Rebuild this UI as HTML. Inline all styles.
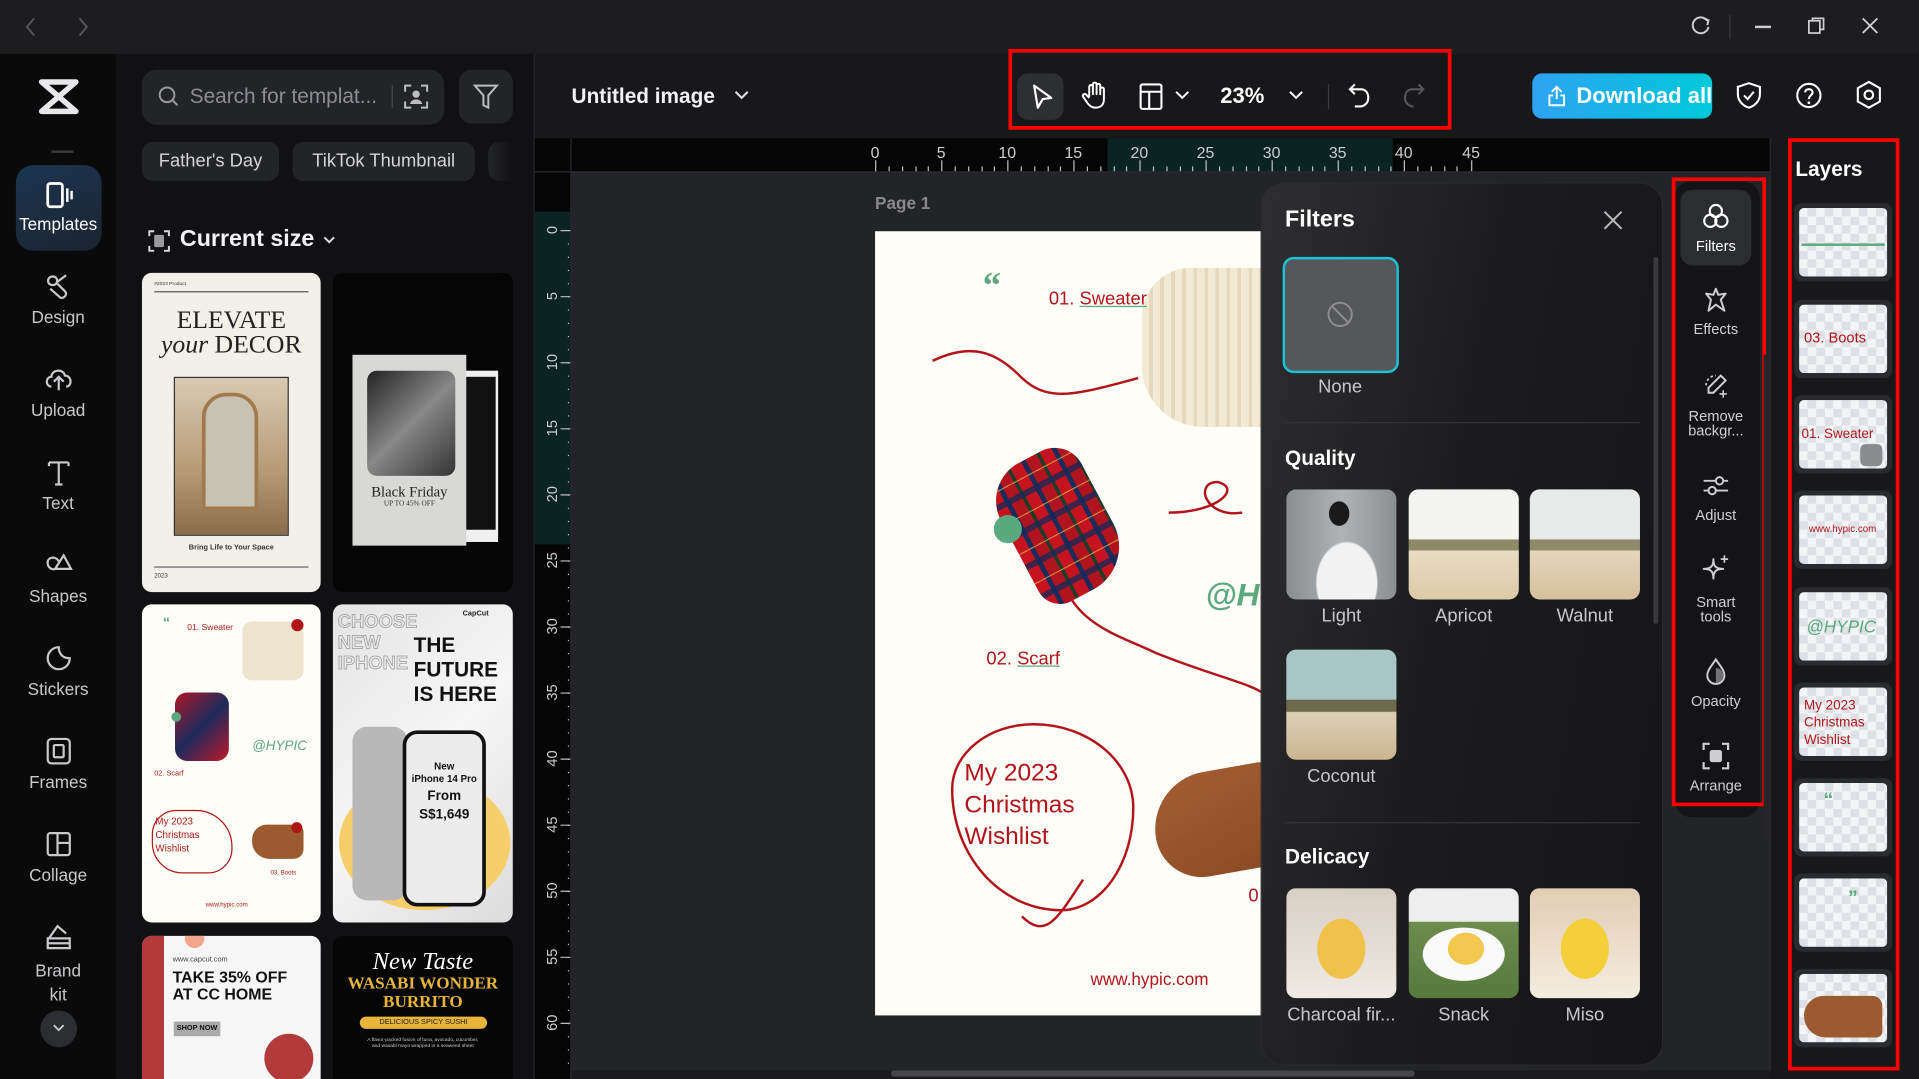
<!DOCTYPE html>
<html><head><meta charset="utf-8">
<style>
html,body{margin:0;padding:0;width:1919px;height:1079px;overflow:hidden;background:#1c1c1e;}
#w{position:absolute;left:0;top:0;width:1568px;height:882px;transform:scale(1.22386,1.2234);transform-origin:0 0;font-family:"Liberation Sans",sans-serif;color:#e8e8ea;overflow:hidden;background:#1e1e20}
.a{position:absolute}
svg{position:absolute;overflow:visible}
.lbl{position:absolute;width:95px;text-align:center;font-size:14px;color:#c9c9cc}
.tl{position:absolute;width:74px;text-align:center;font-size:12px;color:#d0d0d3;line-height:12px}
.thumb{position:absolute;width:90px;height:90px;border-radius:8px}
.tlab{position:absolute;width:90px;text-align:center;font-size:15px;color:#c8c8cb}
.lay{position:absolute;left:1466px;width:80px;height:64px;background:#2a2b2f;border-radius:6px}
.lay .in{position:absolute;left:4px;top:4px;width:72px;height:56px;border-radius:4px;background:repeating-conic-gradient(#dde1e5 0 25%,#f3f4f6 0 50%) 0 0/14px 14px;overflow:hidden}
.card{position:absolute;border-radius:8px;overflow:hidden}
</style></head><body><div id="w">
<!-- title bar -->
<div class="a" style="left:0;top:0;width:1568px;height:44px;background:#1d1d1f"></div>
<svg style="left:20px;top:14px" width="12" height="16"><path d="M8 1 L2 8 L8 15" stroke="#55565a" stroke-width="1.6" fill="none"/></svg>
<svg style="left:62px;top:14px" width="12" height="16"><path d="M3 1 L9 8 L3 15" stroke="#55565a" stroke-width="1.6" fill="none"/></svg>
<svg style="left:1382px;top:13px" width="16" height="16"><path d="M13 4 A6.5 6.5 0 1 0 14 9" stroke="#cfcfd2" stroke-width="1.6" fill="none"/><path d="M10 2 L14 3.5 L13 7.5" stroke="#cfcfd2" stroke-width="1.6" fill="none"/></svg>
<div class="a" style="left:1413px;top:12px;width:1px;height:20px;background:#3a3a3d"></div>
<div class="a" style="left:1434px;top:21px;width:13px;height:1.5px;background:#cfcfd2"></div>
<svg style="left:1477px;top:14px" width="14" height="14"><rect x="1" y="3" width="9" height="10" stroke="#cfcfd2" stroke-width="1.4" fill="none"/><path d="M4 3 V1 H13 V10 H10" stroke="#cfcfd2" stroke-width="1.4" fill="none"/></svg>
<svg style="left:1521px;top:14px" width="14" height="14"><path d="M1 1 L13 13 M13 1 L1 13" stroke="#cfcfd2" stroke-width="1.5"/></svg>

<!-- left sidebar -->
<div class="a" style="left:0;top:44px;width:95px;height:838px;background:#0a0a0b"></div>
<svg style="left:31px;top:64px" width="34" height="30"><path d="M3 3 H31 L3 27 H31 Z" stroke="#e8e8ea" stroke-width="4.5" fill="none" stroke-linejoin="round"/></svg>
<div class="a" style="left:42px;top:123px;width:18px;height:2px;background:#3a3a3d"></div>
<div class="a" style="left:13px;top:135px;width:70px;height:70px;border-radius:14px;background:linear-gradient(160deg,#1b3550,#1c2430)"></div>
<svg style="left:37px;top:149px" width="24" height="22"><rect x="2" y="1" width="12" height="19" rx="2" stroke="#fff" stroke-width="2.2" fill="none"/><path d="M18 5 V16 M21.5 7 V14" stroke="#fff" stroke-width="2"/></svg>
<div class="lbl" style="left:0;top:175px;color:#fff">Templates</div>
<svg style="left:37px;top:223px" width="22" height="22"><path d="M6 3 C1 3 1 10 6 10 C11 10 11 3 6 3 M9 8 L17 2 M4 13 L12 20 C14 22 19 18 16 15 L10 9" stroke="#c9c9cc" stroke-width="1.8" fill="none"/></svg>
<div class="lbl" style="left:0;top:251px">Design</div>
<svg style="left:36px;top:299px" width="24" height="22"><path d="M6 17 C1 17 1 9 6 9 C6 3 16 2 17 8 C23 8 23 17 18 17 M12 20 V10 M8 13 L12 9 L16 13" stroke="#c9c9cc" stroke-width="1.8" fill="none"/></svg>
<div class="lbl" style="left:0;top:327px">Upload</div>
<svg style="left:38px;top:376px" width="20" height="22"><path d="M2 2 H18 M10 2 V20 M2 2 V5 M18 2 V5 M7 20 H13" stroke="#c9c9cc" stroke-width="1.8" fill="none"/></svg>
<div class="lbl" style="left:0;top:403px">Text</div>
<svg style="left:37px;top:451px" width="22" height="22"><path d="M8 14 L15 3 L21 14 Z" stroke="#c9c9cc" stroke-width="1.8" fill="none"/><path d="M11 8 C9 3 1 4 2 10 C3 15 8 15 10 13" stroke="#c9c9cc" stroke-width="1.8" fill="none"/></svg>
<div class="lbl" style="left:0;top:479px">Shapes</div>
<svg style="left:37px;top:527px" width="22" height="22"><path d="M20 11 A9 9 0 1 1 11 2 C11 6 13 11 20 11 Z" stroke="#c9c9cc" stroke-width="1.8" fill="none"/></svg>
<div class="lbl" style="left:0;top:555px">Stickers</div>
<svg style="left:38px;top:603px" width="20" height="22"><rect x="1" y="1" width="18" height="20" rx="3" stroke="#c9c9cc" stroke-width="1.8" fill="none"/><rect x="6" y="6" width="8" height="10" rx="1" stroke="#c9c9cc" stroke-width="1.8" fill="none"/></svg>
<div class="lbl" style="left:0;top:631px">Frames</div>
<svg style="left:38px;top:680px" width="20" height="20"><rect x="1" y="1" width="18" height="18" rx="2" stroke="#c9c9cc" stroke-width="1.8" fill="none"/><path d="M9 1 V19 M9 9 H19" stroke="#c9c9cc" stroke-width="1.8"/></svg>
<div class="lbl" style="left:0;top:707px">Collage</div>
<svg style="left:37px;top:755px" width="22" height="22"><path d="M3 12 L10 2 L17 8 M2 12 H20 V20 H2 Z M2 16 H20" stroke="#c9c9cc" stroke-width="1.8" fill="none"/></svg>
<div class="lbl" style="left:0;top:783px;line-height:20px">Brand<br>kit</div>
<div class="a" style="left:33px;top:826px;width:30px;height:30px;border-radius:50%;background:#2c2d31"></div>
<svg style="left:43px;top:837px" width="10" height="8"><path d="M1 1 L5 5 L9 1" stroke="#c9c9cc" stroke-width="1.5" fill="none"/></svg>

<!-- templates panel -->
<div class="a" style="left:95px;top:44px;width:342px;height:838px;background:#111113"></div>
<div class="a" style="left:116px;top:57px;width:247px;height:45px;border-radius:12px;background:#232428"></div>
<svg style="left:129px;top:70px" width="18" height="18"><circle cx="7.5" cy="7.5" r="6" stroke="#9a9a9e" stroke-width="1.6" fill="none"/><path d="M12 12 L16 16" stroke="#9a9a9e" stroke-width="1.6"/></svg>
<div class="a" style="left:155px;top:69px;font-size:17px;color:#8e8e92">Search for templat...</div>
<div class="a" style="left:320px;top:70px;width:1px;height:18px;background:#4a4a4e"></div>
<svg style="left:330px;top:69px" width="20" height="20"><path d="M1 6 V1 H6 M14 1 H19 V6 M19 14 V19 H14 M6 19 H1 V14" stroke="#bdbdc0" stroke-width="1.6" fill="none"/><circle cx="10" cy="8" r="3" fill="#bdbdc0"/><path d="M5 16 C6 11 14 11 15 16 Z" fill="#bdbdc0"/></svg>
<div class="a" style="left:375px;top:57px;width:44px;height:44px;border-radius:10px;background:#232428"></div>
<svg style="left:386px;top:68px" width="22" height="22"><path d="M2 2 H20 L13 10 V20 L9 18 V10 Z" stroke="#bdbdc0" stroke-width="1.6" fill="none"/></svg>
<div class="a" style="left:116px;top:116px;width:112px;height:32px;border-radius:9px;background:#232428;font-size:15px;color:#d4d4d7;text-align:center;line-height:32px">Father's Day</div>
<div class="a" style="left:239px;top:116px;width:149px;height:32px;border-radius:9px;background:#232428;font-size:15px;color:#d4d4d7;text-align:center;line-height:32px">TikTok Thumbnail</div>
<div class="a" style="left:399px;top:116px;width:20px;height:32px;border-radius:9px 0 0 9px;background:linear-gradient(90deg,#232428,#111113)"></div>
<svg style="left:121px;top:188px" width="18" height="18"><path d="M1 5 V1 H5 M13 1 H17 V5 M17 13 V17 H13 M5 17 H1 V13" stroke="#d8d8db" stroke-width="1.6" fill="none"/><rect x="5" y="4" width="8" height="10" rx="1" fill="#9a9a9e"/></svg>
<div class="a" style="left:147px;top:185px;font-size:19px;font-weight:bold;color:#f2f2f4">Current size</div>
<svg style="left:264px;top:193px" width="10" height="8"><path d="M1 1 L5 5 L9 1" stroke="#ddd" stroke-width="1.6" fill="none"/></svg>

<!-- card 1 -->
<div class="card" style="left:116px;top:223px;width:146px;height:261px;background:#f3efe9">
 <div class="a" style="left:10px;top:6px;font-size:4px;color:#333">#2023 Product</div>
 <div class="a" style="left:10px;top:15px;width:126px;height:1px;background:#555"></div>
 <div class="a" style="left:0;top:28px;width:146px;text-align:center;font-family:'Liberation Serif',serif;font-size:21px;color:#222;line-height:20px">ELEVATE<br><i>your</i> DECOR</div>
 <div class="a" style="left:26px;top:85px;width:92px;height:128px;background:linear-gradient(180deg,#d9cab2,#b59a76 60%,#8a6d4c);border:1px solid #333"></div>
 <div class="a" style="left:49px;top:98px;width:40px;height:90px;border-radius:20px 20px 0 0;border:3px solid #a07a4c;background:#c8c2b4"></div>
 <div class="a" style="left:0;top:222px;width:146px;text-align:center;font-size:6px;font-weight:bold;color:#333">Bring Life to Your Space</div>
 <div class="a" style="left:10px;top:240px;width:126px;height:1px;background:#666"></div>
 <div class="a" style="left:10px;top:245px;font-size:5px;color:#333">2023</div>
</div>
<!-- card 2 -->
<div class="card" style="left:272px;top:223px;width:147px;height:261px;background:#050505">
 <div class="a" style="left:35px;top:80px;width:100px;height:140px;background:#f0f0f0"></div>
 <div class="a" style="left:43px;top:85px;width:90px;height:125px;background:#111"></div>
 <div class="a" style="left:16px;top:67px;width:93px;height:156px;background:#d8d8d6"></div>
 <div class="a" style="left:28px;top:80px;width:72px;height:86px;border-radius:8px;background:linear-gradient(135deg,#222,#888 50%,#333)"></div>
 <div class="a" style="left:16px;top:172px;width:93px;text-align:center;font-family:'Liberation Serif',serif;font-size:12px;color:#222">Black Friday</div>
 <div class="a" style="left:16px;top:186px;width:93px;text-align:center;font-family:'Liberation Serif',serif;font-size:6px;color:#333">UP TO 45% OFF</div>
</div>
<!-- card 3 -->
<div class="card" style="left:116px;top:494px;width:146px;height:260px;background:#fffdf8">
 <div class="a" style="left:17px;top:8px;font-size:12px;font-weight:bold;color:#5aa97f">“</div>
 <div class="a" style="left:37px;top:16px;font-size:7px;color:#b01818">01. Sweater</div>
 <div class="a" style="left:82px;top:14px;width:50px;height:48px;border-radius:8px;background:#eee3cc"></div>
 <div class="a" style="left:122px;top:12px;width:10px;height:10px;border-radius:50%;background:#b01818"></div>
 <div class="a" style="left:27px;top:72px;width:44px;height:56px;border-radius:10px;background:linear-gradient(135deg,#b01828,#1d2a5a 50%,#c0182a)"></div>
 <div class="a" style="left:24px;top:88px;width:8px;height:8px;border-radius:50%;background:#5aa97f"></div>
 <div class="a" style="left:90px;top:110px;font-size:11px;font-style:italic;color:#5aa97f">@HYPIC</div>
 <div class="a" style="left:10px;top:136px;font-size:6px;color:#b01818">02. Scarf</div>
 <div class="a" style="left:8px;top:168px;width:64px;height:50px;border:1px solid #b01818;border-radius:20px 30px 20px 25px"></div>
 <div class="a" style="left:11px;top:172px;font-size:8px;color:#b01818;line-height:11px">My 2023<br>Christmas<br>Wishlist</div>
 <div class="a" style="left:90px;top:180px;width:42px;height:28px;border-radius:12px 6px 8px 14px;background:#9c5a30"></div>
 <div class="a" style="left:122px;top:178px;width:9px;height:9px;border-radius:50%;background:#b01818"></div>
 <div class="a" style="left:105px;top:217px;font-size:5px;color:#b01818">03. Boots</div>
 <div class="a" style="left:52px;top:243px;font-size:5px;color:#b01818">www.hypic.com</div>
</div>
<!-- card 4 -->
<div class="card" style="left:272px;top:494px;width:147px;height:260px;background:linear-gradient(135deg,#e4e4e4,#f6f6f6 50%,#dcdcdc)">
 <div class="a" style="left:4px;top:6px;font-size:15px;font-weight:bold;color:transparent;-webkit-text-stroke:0.6px #999;line-height:17px">CHOOSE<br>NEW<br>IPHONE</div>
 <div class="a" style="left:106px;top:5px;font-size:6px;font-weight:bold;color:#222">CapCut</div>
 <div class="a" style="left:66px;top:24px;font-size:17px;font-weight:bold;color:#111;line-height:20px">THE<br>FUTURE<br>IS HERE</div>
 <div class="a" style="left:5px;top:140px;width:140px;height:110px;border-radius:50%;background:#f6cf6c"></div>
 <div class="a" style="left:16px;top:100px;width:45px;height:142px;border-radius:12px;background:#b8b8b8"></div>
 <div class="a" style="left:57px;top:103px;width:62px;height:138px;border-radius:12px;border:3px solid #111;background:#ececec"></div>
 <div class="a" style="left:60px;top:128px;width:62px;text-align:center;font-size:8px;font-weight:bold;color:#111;line-height:10px">New<br>iPhone 14 Pro</div>
 <div class="a" style="left:60px;top:150px;width:62px;text-align:center;font-size:11px;font-weight:bold;color:#111;line-height:15px">From<br>S$1,649</div>
</div>
<!-- card 5 -->
<div class="card" style="left:116px;top:765px;width:146px;height:117px;background:#f6f6f6;border-radius:8px 8px 0 0">
 <div class="a" style="left:0;top:0;width:18px;height:117px;background:#b33a3a"></div>
 <div class="a" style="left:35px;top:-6px;width:16px;height:16px;border-radius:50%;background:#f4a68c"></div>
 <div class="a" style="left:25px;top:17px;font-size:6px;color:#444">www.capcut.com</div>
 <div class="a" style="left:25px;top:27px;font-size:13px;font-weight:bold;color:#111;line-height:14px">TAKE 35% OFF<br>AT CC HOME</div>
 <div class="a" style="left:26px;top:70px;width:38px;height:12px;background:#aaa;font-size:6px;font-weight:bold;text-align:center;line-height:12px;color:#111">SHOP NOW</div>
 <div class="a" style="left:100px;top:80px;width:40px;height:40px;border-radius:50%;background:#b33a3a"></div>
</div>
<!-- card 6 -->
<div class="card" style="left:272px;top:765px;width:147px;height:117px;background:#060606;border-radius:8px 8px 0 0">
 <div class="a" style="left:0;top:10px;width:147px;text-align:center;font-family:'Liberation Serif',serif;font-style:italic;font-size:20px;color:#fff">New Taste</div>
 <div class="a" style="left:0;top:32px;width:147px;text-align:center;font-family:'Liberation Serif',serif;font-weight:bold;font-size:14px;color:#e8b43a;line-height:15px">WASABI WONDER<br>BURRITO</div>
 <div class="a" style="left:22px;top:66px;width:104px;height:10px;border-radius:5px;background:#e8b43a;font-size:6px;text-align:center;line-height:10px;color:#222">DELICIOUS SPICY SUSHI</div>
 <div class="a" style="left:10px;top:82px;width:127px;text-align:center;font-size:4px;color:#ccc">A flavor-packed fusion of tuna, avocado, cucumber,<br>and wasabi mayo wrapped in a seaweed sheet</div>
</div>

<div class="a" style="left:436px;top:44px;width:1px;height:838px;background:#27272a"></div>
<svg style="left:436px;top:453px" width="8" height="16"><path d="M6 1 L2 8 L6 15" stroke="#555" stroke-width="1.5" fill="none"/></svg>

<!-- top toolbar -->
<div class="a" style="left:437px;top:44px;width:1131px;height:69px;background:#18181b"></div>
<div class="a" style="left:467px;top:69px;font-size:17px;font-weight:bold;color:#f2f2f4">Untitled image</div>
<svg style="left:600px;top:74px" width="12" height="8"><path d="M1 1 L6 6 L11 1" stroke="#ddd" stroke-width="1.7" fill="none"/></svg>
<div class="a" style="left:824px;top:40px;width:356px;height:60px;border:3px solid #f00"></div>
<div class="a" style="left:831px;top:60px;width:38px;height:38px;border-radius:9px;background:#2e2f33"></div>
<svg style="left:843px;top:68px" width="18" height="22"><path d="M2 2 L16 12 L9 13 L5 20 Z" stroke="#fff" stroke-width="1.8" fill="none" stroke-linejoin="round"/></svg>
<svg style="left:884px;top:66px" width="22" height="24"><path d="M6 13 V5 C6 3 9 3 9 5 V11 V3 C9 1 12 1 12 3 V11 V4 C12 2 15 2 15 4 V11 V7 C15 5 18 5 18 7 V15 C18 20 15 22 11 22 C7 22 5 19 3 16 L1 13 C0 11 3 10 4 12 L6 14" stroke="#fff" stroke-width="1.6" fill="none" stroke-linejoin="round"/></svg>
<svg style="left:931px;top:68px" width="20" height="22"><rect x="1" y="1" width="17" height="20" rx="1.5" stroke="#fff" stroke-width="1.7" fill="none"/><path d="M1 7 H18 M8 7 V21" stroke="#fff" stroke-width="1.7"/></svg>
<svg style="left:960px;top:74px" width="12" height="8"><path d="M1 1 L6 6 L11 1" stroke="#fff" stroke-width="1.6" fill="none"/></svg>
<div class="a" style="left:997px;top:68px;font-size:18px;font-weight:bold;color:#fff">23%</div>
<svg style="left:1053px;top:74px" width="12" height="8"><path d="M1 1 L6 6 L11 1" stroke="#fff" stroke-width="1.6" fill="none"/></svg>
<div class="a" style="left:1085px;top:69px;width:1px;height:20px;background:#3e3e42"></div>
<svg style="left:1101px;top:67px" width="20" height="22"><path d="M6 2 L2 6 L6 10 M2 6 H11 C15 6 17 9 17 13 C17 17 14 20 10 20 H6" stroke="#fff" stroke-width="1.7" fill="none"/></svg>
<svg style="left:1145px;top:67px" width="20" height="22"><path d="M14 2 L18 6 L14 10 M18 6 H9 C5 6 3 9 3 13 C3 17 6 20 10 20" stroke="#55565a" stroke-width="1.7" fill="none"/></svg>
<div class="a" style="left:1252px;top:60px;width:147px;height:37px;border-radius:8px;background:linear-gradient(90deg,#2ea3f2,#00c9d9)"></div>
<svg style="left:1264px;top:69px" width="16" height="18"><path d="M8 12 V2 M4 6 L8 2 L12 6 M5 9 H2 V17 H14 V9 H11" stroke="#fff" stroke-width="1.6" fill="none"/></svg>
<div class="a" style="left:1288px;top:68px;font-size:18px;font-weight:bold;color:#fff">Download all</div>
<svg style="left:1419px;top:67px" width="20" height="22"><path d="M10 1 L19 4 V10 C19 16 14 20 10 21 C6 20 1 16 1 10 V4 Z" stroke="#fff" stroke-width="1.7" fill="none"/><path d="M6 11 L9 14 L14 8" stroke="#fff" stroke-width="1.7" fill="none"/></svg>
<svg style="left:1467px;top:67px" width="22" height="22"><circle cx="11" cy="11" r="9.5" stroke="#fff" stroke-width="1.7" fill="none"/><path d="M8 8.5 C8 5 14 5 14 8.5 C14 11 11 11 11 14" stroke="#fff" stroke-width="1.7" fill="none"/><circle cx="11" cy="17" r="1.1" fill="#fff"/></svg>
<svg style="left:1516px;top:66px" width="22" height="24"><path d="M11 1 L20 6 V17 L11 22 L2 17 V6 Z" stroke="#fff" stroke-width="1.7" fill="none"/><circle cx="11" cy="11.5" r="3.5" stroke="#fff" stroke-width="1.7" fill="none"/></svg>

<!-- rulers -->
<div class="a" style="left:437px;top:113px;width:1010px;height:27px;background:#050505"></div>
<div class="a" style="left:905px;top:113px;width:233px;height:27px;background:#0a2323"></div>
<div class="a" style="left:437px;top:140px;width:29px;height:742px;background:#050505"></div>
<div class="a" style="left:437px;top:173px;width:29px;height:272px;background:#0a2323"></div>
<div class="a" style="left:466px;top:113px;width:1px;height:769px;background:#2a2a2d"></div>
<div class="a" style="left:437px;top:140px;width:1010px;height:1px;background:#2a2a2d"></div>
<svg style="left:0;top:0" width="1568" height="882">
<g fill="#cfcfd2" font-family="Liberation Sans" font-size="13">
<text x="715" y="129" text-anchor="middle">0</text><text x="769" y="129" text-anchor="middle">5</text><text x="823" y="129" text-anchor="middle">10</text><text x="877" y="129" text-anchor="middle">15</text><text x="931" y="129" text-anchor="middle">20</text><text x="985" y="129" text-anchor="middle">25</text><text x="1039" y="129" text-anchor="middle">30</text><text x="1093" y="129" text-anchor="middle">35</text><text x="1147" y="129" text-anchor="middle">40</text><text x="1202" y="129" text-anchor="middle">45</text>
</g>
<path stroke="#bdbdc0" stroke-width="1" d="M715.5 131V140M726.5 136V140M737.5 136V140M748.5 136V140M758.5 136V140M769.5 131V140M780.5 136V140M791.5 136V140M802.5 136V140M812.5 136V140M823.5 131V140M834.5 136V140M845.5 136V140M856.5 136V140M866.5 136V140M877.5 131V140M888.5 136V140M899.5 136V140M910.5 136V140M920.5 136V140M931.5 131V140M942.5 136V140M953.5 136V140M964.5 136V140M974.5 136V140M985.5 131V140M996.5 136V140M1007.5 136V140M1018.5 136V140M1028.5 136V140M1039.5 131V140M1050.5 136V140M1061.5 136V140M1072.5 136V140M1082.5 136V140M1093.5 131V140M1104.5 136V140M1115.5 136V140M1126.5 136V140M1136.5 136V140M1147.5 131V140M1158.5 136V140M1169.5 136V140M1180.5 136V140M1190.5 136V140M1202.5 131V140"/>
<g fill="#cfcfd2" font-family="Liberation Sans" font-size="12">
<text transform="translate(455,188) rotate(-90)" text-anchor="middle">0</text><text transform="translate(455,242) rotate(-90)" text-anchor="middle">5</text><text transform="translate(455,296) rotate(-90)" text-anchor="middle">10</text><text transform="translate(455,350) rotate(-90)" text-anchor="middle">15</text><text transform="translate(455,404) rotate(-90)" text-anchor="middle">20</text><text transform="translate(455,458) rotate(-90)" text-anchor="middle">25</text><text transform="translate(455,512) rotate(-90)" text-anchor="middle">30</text><text transform="translate(455,566) rotate(-90)" text-anchor="middle">35</text><text transform="translate(455,620) rotate(-90)" text-anchor="middle">40</text><text transform="translate(455,674) rotate(-90)" text-anchor="middle">45</text><text transform="translate(455,728) rotate(-90)" text-anchor="middle">50</text><text transform="translate(455,782) rotate(-90)" text-anchor="middle">55</text><text transform="translate(455,836) rotate(-90)" text-anchor="middle">60</text>
</g>
<path stroke="#bdbdc0" d="M458 188.5H466M458 242.5H466M458 296.5H466M458 350.5H466M458 404.5H466M458 458.5H466M458 512.5H466M458 566.5H466M458 620.5H466M458 674.5H466M458 728.5H466M458 782.5H466M458 836.5H466"/>
<path stroke="#bdbdc0" stroke-dasharray="1 9.8" d="M464.5 199V870"/>
</svg>

<!-- canvas area -->
<div class="a" style="left:467px;top:141px;width:980px;height:734px;background:#232428"></div>
<div class="a" style="left:715px;top:158px;font-size:14px;color:#8a8a8e;font-weight:bold">Page 1</div>
<div class="a" style="left:715px;top:189px;width:316px;height:641px;background:#fffdf7;overflow:hidden">
 <svg style="left:0;top:0" width="316" height="641">
  <path d="M47 106 C80 90 100 100 118 118 C140 140 160 135 215 120 M240 230 C280 230 300 210 280 205 C260 205 270 235 300 230 M150 262 C150 320 200 330 230 345 C280 365 310 370 320 380 M120 560 C140 580 150 560 170 530" stroke="#b3141c" stroke-width="2" fill="none"/>
 </svg>
 <div class="a" style="left:218px;top:30px;width:110px;height:130px;border-radius:40px 10px 8px 50px;background:repeating-linear-gradient(90deg,#f3ead6 0 6px,#e6d8bc 6px 9px),#efe4cc"></div>
 <div class="a" style="left:88px;top:30px;font-size:30px;font-weight:bold;color:#5aa97f;line-height:30px;font-family:'Liberation Serif',serif">“</div>
 <div class="a" style="left:142px;top:47px;font-size:15px;color:#b3141c;white-space:nowrap">01. <span style="text-decoration:underline;text-decoration-color:#5aa97f">Sweater</span></div>
 <div class="a" style="left:110px;top:180px;width:80px;height:120px;border-radius:35px 25px 40px 20px;transform:rotate(-28deg);background:repeating-linear-gradient(0deg,transparent 0 12px,rgba(20,40,90,.75) 12px 17px,transparent 17px 26px,rgba(230,200,80,.6) 26px 27px),repeating-linear-gradient(90deg,#c5141f 0 10px,#1b2c5a 10px 14px,#b0141e 14px 24px,#223a2a 24px 27px)"></div>
 <div class="a" style="left:97px;top:232px;width:23px;height:23px;border-radius:50%;background:#5aa97f"></div>
 <div class="a" style="left:270px;top:282px;font-size:26px;font-style:italic;font-weight:bold;color:#5aa97f">@HY</div>
 <div class="a" style="left:91px;top:341px;font-size:15px;color:#b3141c">02. <span style="text-decoration:underline;text-decoration-color:#5aa97f">Scarf</span></div>
 <div class="a" style="left:62px;top:402px;width:146px;height:150px;border:2px solid #b3141c;border-radius:45% 55% 40% 60% / 35% 45% 55% 65%"></div>
 <div class="a" style="left:73px;top:430px;font-size:20px;color:#b3141c;line-height:26px">My 2023<br>Christmas<br>Wishlist</div>
 <div class="a" style="left:228px;top:440px;width:110px;height:85px;border-radius:50px 20px 10px 40px;background:linear-gradient(160deg,#a45e32,#8b4a24);transform:rotate(-10deg)"></div>
 <div class="a" style="left:305px;top:535px;font-size:15px;color:#b3141c">0</div>
 <div class="a" style="left:176px;top:603px;font-size:14px;color:#b3141c">www.hypic.com</div>
</div>

<!-- filters panel -->
<div class="a" style="left:1031px;top:150px;width:327px;height:720px;border-radius:18px;background:linear-gradient(100deg,#2e2e30 0%,#1c1c1e 45%,#151517 100%);box-shadow:0 0 0 1px #2a2a2d"></div>
<div class="a" style="left:1050px;top:169px;font-size:19px;font-weight:bold;color:#fff">Filters</div>
<svg style="left:1310px;top:172px" width="16" height="16"><path d="M1 1 L15 15 M15 1 L1 15" stroke="#bbb" stroke-width="1.6"/></svg>
<div class="a" style="left:1048px;top:210px;width:91px;height:91px;border-radius:9px;border:2px solid #1cc3d6;background:#56575b"></div>
<svg style="left:1084px;top:246px" width="22" height="22"><circle cx="11" cy="11" r="9.5" stroke="#8e8e92" stroke-width="1.6" fill="none"/><path d="M4.5 4.5 L17.5 17.5" stroke="#8e8e92" stroke-width="1.6"/></svg>
<div class="tlab" style="left:1050px;top:308px">None</div>
<div class="a" style="left:1050px;top:345px;width:290px;height:1px;background:#343437"></div>
<div class="a" style="left:1050px;top:365px;font-size:17px;font-weight:bold;color:#fff">Quality</div>
<div class="thumb" style="left:1051px;top:400px;background:radial-gradient(ellipse 10% 12% at 48% 22%,#1a1a1a 0 90%,transparent 95%),radial-gradient(ellipse 30% 40% at 55% 85%,#f2f2f2 0 90%,transparent 95%),linear-gradient(90deg,#8a8d90,#b0b3b5 50%,#8c8f92)"></div>
<div class="thumb" style="left:1151px;top:400px;background:linear-gradient(180deg,#f4f4f2 0 45%,#8e8a68 46% 55%,#e8dcc4 56%,#dccaa6)"></div>
<div class="thumb" style="left:1250px;top:400px;background:linear-gradient(180deg,#e8eaea 0 45%,#8e8a68 46% 55%,#e4d6bc 56%,#d4c09c)"></div>
<div class="tlab" style="left:1051px;top:495px">Light</div>
<div class="tlab" style="left:1151px;top:495px">Apricot</div>
<div class="tlab" style="left:1250px;top:495px">Walnut</div>
<div class="thumb" style="left:1051px;top:531px;background:linear-gradient(180deg,#a9c6c7 0 45%,#6e6a4e 46% 56%,#ddd0b6 57%,#cbb590)"></div>
<div class="tlab" style="left:1051px;top:626px">Coconut</div>
<div class="a" style="left:1050px;top:672px;width:290px;height:1px;background:#343437"></div>
<div class="a" style="left:1050px;top:691px;font-size:17px;font-weight:bold;color:#fff">Delicacy</div>
<div class="thumb" style="left:1051px;top:726px;background:radial-gradient(ellipse 24% 30% at 50% 55%,#f1c24a 0 90%,transparent 92%),linear-gradient(180deg,#d8cfc4,#e8e2da 70%,#f0ebe4)"></div>
<div class="thumb" style="left:1151px;top:726px;background:radial-gradient(ellipse 18% 16% at 52% 55%,#f2c84e 0 90%,transparent 92%),radial-gradient(ellipse 40% 26% at 50% 60%,#fafafa 0 92%,transparent 94%),linear-gradient(180deg,#eeeeee 0 30%,#6d8c4e 31%,#557a3c)"></div>
<div class="thumb" style="left:1250px;top:726px;background:radial-gradient(ellipse 24% 30% at 50% 55%,#f4cf3a 0 90%,transparent 92%),linear-gradient(180deg,#e0cdb4,#efe3d2 70%,#f4ece0)"></div>
<div class="tlab" style="left:1046px;top:821px;width:100px">Charcoal fir...</div>
<div class="tlab" style="left:1151px;top:821px">Snack</div>
<div class="tlab" style="left:1250px;top:821px">Miso</div>
<div class="a" style="left:1351px;top:210px;width:4px;height:300px;border-radius:2px;background:#3a3a3d"></div>

<!-- tools column -->
<div class="a" style="left:1368px;top:148px;width:70px;height:520px;border-radius:14px;background:#141416"></div>
<div class="a" style="left:1366px;top:145px;width:71px;height:508px;border:3px solid #f00"></div>
<div class="a" style="left:1373px;top:155px;width:58px;height:62px;border-radius:10px;background:#2c2d31"></div>
<svg style="left:1391px;top:166px" width="22" height="22"><circle cx="11" cy="6.5" r="5" stroke="#fff" stroke-width="1.7" fill="none"/><circle cx="6.5" cy="14.5" r="5" stroke="#fff" stroke-width="1.7" fill="none"/><circle cx="15.5" cy="14.5" r="5" stroke="#fff" stroke-width="1.7" fill="none"/></svg>
<div class="tl" style="left:1365px;top:195px;color:#fff">Filters</div>
<svg style="left:1392px;top:234px" width="20" height="22"><path d="M10 2 L12 7 L18 6 L14 11 L17 20 L10 15 L4 20 L6 11 L2 6 L8 7 Z" stroke="#cfcfd2" stroke-width="1.6" fill="none" stroke-linejoin="round"/></svg>
<div class="tl" style="left:1365px;top:263px">Effects</div>
<svg style="left:1391px;top:304px" width="22" height="22"><path d="M15 3 L19 7 L9 17 L5 17 L5 13 Z" stroke="#cfcfd2" stroke-width="1.6" fill="none"/><path d="M3 11 A8 8 0 0 1 11 3" stroke="#cfcfd2" stroke-width="1.4" stroke-dasharray="2 2" fill="none"/><path d="M17 15 V21 M14 18 H20" stroke="#cfcfd2" stroke-width="1.3"/></svg>
<div class="tl" style="left:1365px;top:334px">Remove<br>backgr...</div>
<svg style="left:1391px;top:386px" width="22" height="22"><path d="M1 7 H21 M1 15 H21" stroke="#cfcfd2" stroke-width="1.6"/><circle cx="14" cy="7" r="3" fill="#141416" stroke="#cfcfd2" stroke-width="1.6"/><circle cx="8" cy="15" r="3" fill="#141416" stroke="#cfcfd2" stroke-width="1.6"/></svg>
<div class="tl" style="left:1365px;top:415px">Adjust</div>
<svg style="left:1390px;top:453px" width="24" height="24"><path d="M10 4 C10 10 8 12 2 12 C8 12 10 14 10 20 C10 14 12 12 18 12 C12 12 10 10 10 4 Z" stroke="#cfcfd2" stroke-width="1.6" fill="none" stroke-linejoin="round"/><path d="M19 1 V7 M16 4 H22" stroke="#cfcfd2" stroke-width="1.4"/></svg>
<div class="tl" style="left:1365px;top:486px">Smart<br>tools</div>
<svg style="left:1393px;top:538px" width="18" height="22"><path d="M9 1 C13 7 16 10 16 14 A7 7 0 0 1 2 14 C2 10 5 7 9 1 Z" stroke="#cfcfd2" stroke-width="1.6" fill="none"/><path d="M9 20 A6 6 0 0 0 9 8" fill="#cfcfd2" opacity=".5"/></svg>
<div class="tl" style="left:1365px;top:567px">Opacity</div>
<svg style="left:1391px;top:607px" width="22" height="22"><path d="M1 6 V1 H6 M16 1 H21 V6 M21 16 V21 H16 M6 21 H1 V16" stroke="#cfcfd2" stroke-width="1.8" fill="none"/><rect x="6" y="6" width="10" height="10" rx="2" fill="#cfcfd2"/></svg>
<div class="tl" style="left:1365px;top:636px">Arrange</div>
<div class="a" style="left:1441px;top:290px;width:3px;height:400px;background:#26262a"></div>

<!-- layers -->
<div class="a" style="left:1447px;top:113px;width:121px;height:769px;background:#18181b"></div>
<div class="a" style="left:1446px;top:113px;width:1px;height:769px;background:#2a2a2d"></div>
<div class="a" style="left:1461px;top:113px;width:85px;height:756px;border:3px solid #f00"></div>
<div class="a" style="left:1467px;top:129px;font-size:17px;font-weight:bold;color:#fff">Layers</div>
<div class="lay" style="top:166px"><div class="in"><div class="a" style="left:2px;top:29px;width:68px;height:2px;background:#5aa97f"></div></div></div>
<div class="lay" style="top:245px"><div class="in"><div class="a" style="left:4px;top:20px;font-size:12px;color:#b3141c">03. Boots</div></div></div>
<div class="lay" style="top:323px"><div class="in"><div class="a" style="left:2px;top:22px;font-size:11px;color:#b3141c;white-space:nowrap">01. Sweater</div><div class="a" style="left:50px;top:36px;width:18px;height:18px;border-radius:4px;background:#8a8b8f"></div></div></div>
<div class="lay" style="top:401px"><div class="in"><div class="a" style="left:8px;top:23px;font-size:8px;color:#b3141c">www.hypic.com</div></div></div>
<div class="lay" style="top:480px"><div class="in"><div class="a" style="left:6px;top:20px;font-size:14px;font-style:italic;color:#5aa97f">@HYPIC</div></div></div>
<div class="lay" style="top:558px"><div class="in"><div class="a" style="left:4px;top:8px;font-size:11px;color:#b3141c;line-height:14px">My 2023<br>Christmas<br>Wishlist</div></div></div>
<div class="lay" style="top:636px"><div class="in"><div class="a" style="left:20px;top:6px;font-size:16px;font-weight:bold;color:#5aa97f">“</div></div></div>
<div class="lay" style="top:714px"><div class="in"><div class="a" style="left:40px;top:8px;font-size:16px;font-weight:bold;color:#5aa97f">”</div></div></div>
<div class="lay" style="top:792px"><div class="in"><div class="a" style="left:4px;top:18px;width:64px;height:34px;border-radius:20px 10px 6px 22px;background:#9c5a30"></div></div></div>

<!-- bottom scrollbar -->
<div class="a" style="left:467px;top:875px;width:980px;height:7px;background:#1b1b1e"></div>
<div class="a" style="left:728px;top:875px;width:428px;height:5px;border-radius:3px;background:#45464a"></div>
</div></body></html>
